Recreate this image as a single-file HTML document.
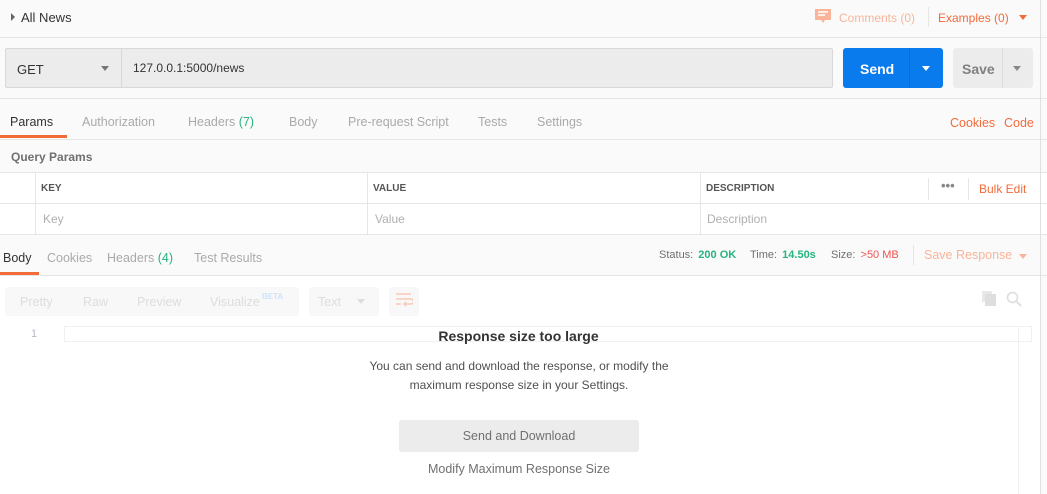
<!DOCTYPE html>
<html><head><meta charset="utf-8"><style>
*{box-sizing:border-box;margin:0;padding:0}
body{width:1047px;height:494px;overflow:hidden;background:#fafafa;font-family:"Liberation Sans",sans-serif;font-size:12px;color:#505050;position:relative}
.a{position:absolute;white-space:nowrap}
.o{color:#f26b3a}
.g{color:#26b47f}
.l{color:#aaa}
.hl{position:absolute;height:1px;background:#e6e6e6}
.vl{position:absolute;width:1px;background:#e6e6e6}
</style></head><body>
<div class="a" style="left:11px;top:13px;width:0;height:0;border-left:4px solid #666;border-top:4px solid transparent;border-bottom:4px solid transparent"></div>
<div class="a" style="left:21px;top:10px;font-size:13px;color:#333">All News</div>
<svg class="a" style="left:815px;top:9px" width="17" height="17"><path d="M0 0h16v11h-6l-2 3-2-3H0z" fill="#f9b49a"/><path d="M3 3h10M3 6h7" stroke="#fff" stroke-width="1.5"/></svg>
<div class="a" style="left:839px;top:11px;color:#f9b49a">Comments (0)</div>
<div class="vl" style="left:928px;top:7px;height:20px"></div>
<div class="a o" style="left:938px;top:11px">Examples (0)</div>
<div class="a" style="left:1019px;top:15px;border-top:5px solid #f26b3a;border-left:4px solid transparent;border-right:4px solid transparent"></div>
<div class="hl" style="left:0;top:37px;width:1047px"></div>
<div class="a" style="left:5px;top:48px;width:828px;height:40px;background:#ececec;border:1px solid #d8d8d8;border-radius:2px"></div>
<div class="vl" style="left:121px;top:48px;height:40px;background:#d8d8d8"></div>
<div class="a" style="left:17px;top:62px;font-size:13px;color:#333">GET</div>
<div class="a" style="left:101px;top:66px;border-top:5px solid #777;border-left:4px solid transparent;border-right:4px solid transparent"></div>
<div class="a" style="left:133px;top:61px;color:#333">127.0.0.1:5000/news</div>
<div class="a" style="left:843px;top:48px;width:100px;height:40px;background:#097bed;border-radius:3px"></div>
<div class="vl" style="left:909px;top:48px;height:40px;background:#0a6bd0"></div>
<div class="a" style="left:860px;top:61px;color:#fff;font-weight:bold;font-size:14px">Send</div>
<div class="a" style="left:922px;top:66px;border-top:5px solid #fff;border-left:4px solid transparent;border-right:4px solid transparent"></div>
<div class="a" style="left:953px;top:48px;width:80px;height:40px;background:#ececec;border-radius:3px"></div>
<div class="vl" style="left:1002px;top:48px;height:40px;background:#ddd"></div>
<div class="a" style="left:962px;top:61px;color:#808080;font-weight:bold;font-size:14px">Save</div>
<div class="a" style="left:1013px;top:66px;border-top:5px solid #888;border-left:4px solid transparent;border-right:4px solid transparent"></div>
<div class="hl" style="left:0;top:98px;width:1047px"></div>
<div class="a" style="left:10px;top:115px;font-size:12.5px;color:#333">Params</div>
<div class="a" style="left:0;top:135px;width:67px;height:3px;background:#f26b3a"></div>
<div class="a l" style="left:82px;top:115px;font-size:12.5px">Authorization</div>
<div class="a l" style="left:188px;top:115px;font-size:12.5px">Headers <span class="g">(7)</span></div>
<div class="a l" style="left:289px;top:115px;font-size:12.5px">Body</div>
<div class="a l" style="left:348px;top:115px;font-size:12.5px">Pre-request Script</div>
<div class="a l" style="left:478px;top:115px;font-size:12.5px">Tests</div>
<div class="a l" style="left:537px;top:115px;font-size:12.5px">Settings</div>
<div class="a o" style="left:950px;top:116px;font-size:12.5px">Cookies</div>
<div class="a o" style="left:1004px;top:116px;font-size:12.5px">Code</div>
<div class="hl" style="left:0;top:139px;width:1047px"></div>
<div class="a" style="left:11px;top:150px;color:#707070;font-weight:bold">Query Params</div>
<div class="a" style="left:0;top:172px;width:1047px;height:63px;background:#fff"></div>
<div class="hl" style="left:0;top:172px;width:1047px"></div>
<div class="hl" style="left:0;top:203px;width:1047px"></div>
<div class="hl" style="left:0;top:234px;width:1047px"></div>
<div class="vl" style="left:35px;top:172px;height:62px"></div>
<div class="vl" style="left:367px;top:172px;height:62px"></div>
<div class="vl" style="left:700px;top:172px;height:62px"></div>
<div class="vl" style="left:928px;top:178px;height:22px"></div>
<div class="vl" style="left:968px;top:178px;height:22px"></div>
<div class="a" style="left:41px;top:183px;font-size:10px;font-weight:bold;color:#555">KEY</div>
<div class="a" style="left:373px;top:183px;font-size:10px;font-weight:bold;color:#555">VALUE</div>
<div class="a" style="left:706px;top:183px;font-size:10px;font-weight:bold;color:#555">DESCRIPTION</div>
<div class="a" style="left:941px;top:178px;font-size:13px;color:#888;font-weight:bold">•••</div>
<div class="a o" style="left:979px;top:182px">Bulk Edit</div>
<div class="a" style="left:43px;top:212px;color:#b0b0b0">Key</div>
<div class="a" style="left:375px;top:212px;color:#b0b0b0">Value</div>
<div class="a" style="left:707px;top:212px;color:#b0b0b0">Description</div>
<div class="a" style="left:3px;top:251px;color:#333;font-size:12.5px">Body</div>
<div class="a" style="left:0;top:272px;width:39px;height:3px;background:#f26b3a"></div>
<div class="a l" style="left:47px;top:251px;font-size:12.5px">Cookies</div>
<div class="a l" style="left:107px;top:251px;font-size:12.5px">Headers <span class="g">(4)</span></div>
<div class="a l" style="left:194px;top:251px;font-size:12.5px">Test Results</div>
<div class="a" style="left:659px;top:249px;font-size:11px;color:#707070">Status: <span class="g" style="font-weight:bold;margin-left:2px">200 OK</span></div>
<div class="a" style="left:750px;top:249px;font-size:11px;color:#707070">Time: <span class="g" style="font-weight:bold;margin-left:2px">14.50s</span></div>
<div class="a" style="left:831px;top:249px;font-size:11px;color:#707070">Size: <span style="color:#ef5350;margin-left:2px">&gt;50 MB</span></div>
<div class="vl" style="left:913px;top:245px;height:20px"></div>
<div class="a" style="left:924px;top:248px;color:#f9b49a;font-size:12.5px">Save Response</div>
<div class="a" style="left:1019px;top:254px;border-top:5px solid #f9b49a;border-left:4px solid transparent;border-right:4px solid transparent"></div>
<div class="hl" style="left:0;top:275px;width:1047px"></div>
<div class="a" style="left:0;top:276px;width:1040px;height:218px;background:#fff"></div>
<div class="a" style="left:5px;top:287px;width:294px;height:29px;background:#f8f8f8;border-radius:3px"></div>
<div class="a" style="left:20px;top:295px;color:#ddd;font-size:12.5px">Pretty</div>
<div class="a" style="left:83px;top:295px;color:#ddd;font-size:12.5px">Raw</div>
<div class="a" style="left:137px;top:295px;color:#ddd;font-size:12.5px">Preview</div>
<div class="a" style="left:210px;top:295px;color:#ddd;font-size:12.5px">Visualize</div>
<div class="a" style="left:262px;top:292px;color:#cfe3fb;font-size:8px;font-weight:bold">BETA</div>
<div class="a" style="left:309px;top:287px;width:70px;height:29px;background:#f8f8f8;border-radius:3px"></div>
<div class="a" style="left:318px;top:295px;color:#ddd;font-size:12.5px">Text</div>
<div class="a" style="left:357px;top:299px;border-top:5px solid #ddd;border-left:4px solid transparent;border-right:4px solid transparent"></div>
<div class="a" style="left:389px;top:287px;width:30px;height:29px;background:#f8f8f8;border-radius:3px"></div>
<svg class="a" style="left:395px;top:292px" width="18" height="18"><path d="M1 2h15M1 7h15a2.5 2.5 0 0 1 0 5H9M11 10l-2 2 2 2M1 12h5" stroke="#fbc8b6" stroke-width="1.5" fill="none"/></svg>
<svg class="a" style="left:982px;top:291px" width="16" height="16"><rect x="0" y="0" width="10" height="11" fill="#e8e8e8"/><rect x="3" y="3" width="11" height="12" fill="#dedede"/></svg>
<svg class="a" style="left:1006px;top:291px" width="16" height="16"><circle cx="6.5" cy="6.5" r="5" stroke="#e0e0e0" stroke-width="1.7" fill="none"/><path d="M10 10l5 5" stroke="#e0e0e0" stroke-width="2"/></svg>
<div class="a" style="left:31px;top:328px;color:#b5bcc8;font-size:11px">1</div>
<div class="a" style="left:64px;top:326px;width:968px;height:16px;border:1px solid #f0f0f0"></div>
<div class="vl" style="left:1018px;top:326px;height:168px;background:#f0f0f0"></div>
<div class="a" style="left:0;top:328px;width:1047px;text-align:center;font-weight:bold;font-size:14px;color:#333;padding-right:10px">Response size too large</div>
<div class="a" style="left:0;top:357px;width:1047px;text-align:center;color:#505050;padding-right:9px;line-height:19px;font-size:12px">You can send and download the response, or modify the<br>maximum response size in your Settings.</div>
<div class="a" style="left:399px;top:420px;width:240px;height:32px;background:#ececec;border-radius:3px;text-align:center;line-height:32px;color:#707070;font-size:12.5px">Send and Download</div>
<div class="a" style="left:399px;top:462px;width:240px;text-align:center;color:#707070;font-size:12.5px">Modify Maximum Response Size</div>
<div class="vl" style="left:1040px;top:0;height:494px;background:#e0e0e0"></div>
</body></html>
